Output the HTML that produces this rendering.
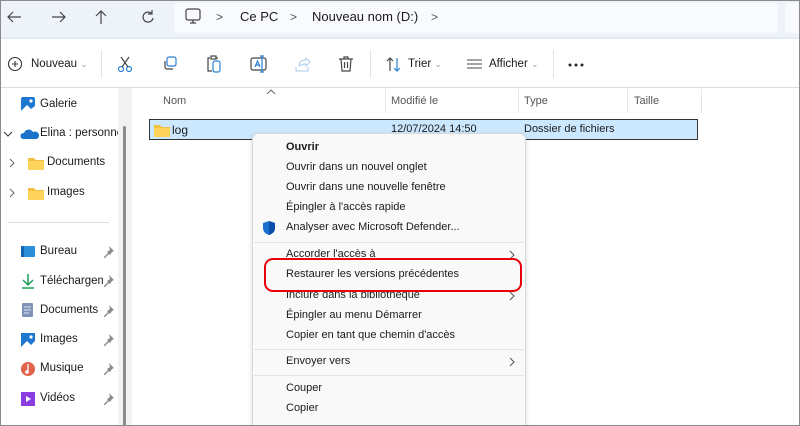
<!DOCTYPE html>
<html><head><meta charset="utf-8"><style>
*{margin:0;padding:0;box-sizing:border-box}
html,body{width:800px;height:426px;overflow:hidden}
body{background:#fff;font-family:"Liberation Sans",sans-serif;font-size:12px;color:#1a1a1a;position:relative}
.a{position:absolute;white-space:nowrap}
svg{position:absolute}
.mi{position:absolute;left:286px;font-size:11px;white-space:nowrap}
.sep{position:absolute;left:254px;width:270px;height:1px;background:#e3e3e3}
.sl{position:absolute;white-space:nowrap;overflow:hidden;font-size:11.5px}
</style></head><body>
<div class="a" style="left:0;top:0;width:800px;height:426px;border:1px solid #8a8a8a;z-index:50;pointer-events:none"></div>
<!-- top bar -->
<div class="a" style="left:0;top:0;width:800px;height:38px;background:#eef3f9"></div>
<div class="a" style="left:0;top:37px;width:800px;height:2px;background:#e4eaf2"></div>
<div class="a" style="left:174px;top:3px;width:604px;height:30px;background:#f8fafd;border-radius:5px"></div>
<div class="a" style="left:785px;top:3px;width:20px;height:30px;background:#f8fafd;border-radius:5px"></div>
<svg width="180" height="38" style="left:0;top:0" fill="none" stroke="#444" stroke-width="1.2">
<path d="M8 17h13M13 12l-5 5 5 5"/><path d="M52 17h13M60 12l5 5-5 5"/><path d="M101 11v13M96 16l5-5 5 5"/>
<path d="M152 14a5 5 0 1 0 1 4M152 10v4h-4"/>
</svg>
<svg width="20" height="20" style="left:184px;top:7px" fill="none" stroke="#444" stroke-width="1.2"><rect x="2" y="2" width="14" height="11" rx="2"/><path d="M9 13v3M6 16h6"/></svg>
<div class="a" style="left:216px;top:10px;font-size:12px;color:#555">&gt;</div>
<div class="a" style="left:240px;top:9px;font-size:13px">Ce PC</div>
<div class="a" style="left:290px;top:10px;font-size:12px;color:#555">&gt;</div>
<div class="a" style="left:312px;top:9px;font-size:13px">Nouveau nom (D:)</div>
<div class="a" style="left:431px;top:10px;font-size:12px;color:#555">&gt;</div>
<!-- toolbar -->
<div class="a" style="left:0;top:87px;width:800px;height:1px;background:#d8dde3"></div>
<div class="a" style="left:101px;top:50px;width:1px;height:28px;background:#e2e2e2"></div>
<div class="a" style="left:370px;top:50px;width:1px;height:28px;background:#e2e2e2"></div>
<div class="a" style="left:553px;top:50px;width:1px;height:28px;background:#e2e2e2"></div>
<svg width="16" height="16" style="left:7px;top:56px" fill="none" stroke="#333" stroke-width="1.1"><circle cx="8" cy="8" r="6.5"/><path d="M8 5v6M5 8h6"/></svg>
<div class="a" style="left:31px;top:58px;font-size:11.5px">Nouveau <span style="color:#999;font-size:9px">⌄</span></div>
<svg width="20" height="20" style="left:116px;top:54px" fill="none" stroke="#2a7fd4" stroke-width="1.2"><circle cx="5" cy="15" r="2.5"/><circle cx="13" cy="15" r="2.5"/><path d="M6 13L13 3M12 13L5 3" stroke="#444"/></svg>
<svg width="20" height="20" style="left:161px;top:55px" fill="none" stroke-width="1.2"><rect x="6" y="2" width="9" height="9" rx="2" stroke="#2a7fd4"/><path d="M4 6v6a2 2 0 0 0 2 2h6" stroke="#444"/></svg>
<svg width="20" height="20" style="left:205px;top:54px" fill="none" stroke-width="1.2"><path d="M5 4H3v13h4M11 4h2" stroke="#444"/><rect x="6" y="2" width="5" height="3" stroke="#444"/><rect x="8" y="7" width="7" height="11" rx="2" stroke="#2a7fd4"/></svg>
<svg width="20" height="20" style="left:249px;top:54px" fill="none" stroke-width="1.2"><rect x="2" y="4" width="15" height="12" rx="2" stroke="#444"/><path d="M6 13l2.5-6 2.5 6M7 11h3" stroke="#2a7fd4"/><path d="M13 2v16M11 2h4M11 18h4" stroke="#2a7fd4"/></svg>
<svg width="20" height="20" style="left:293px;top:55px" fill="none" stroke="#b8d4ee" stroke-width="1.2"><path d="M3 12v4h12v-4M6 11c0-4 3-6 7-6V3l4 4-4 4V9c-3 0-5 1-7 2"/></svg>
<svg width="20" height="20" style="left:336px;top:54px" fill="none" stroke="#444" stroke-width="1.2"><path d="M3 5h14M8 5V3h4v2M5 5l1 12h8l1-12M8.5 8v6M11.5 8v6"/></svg>
<svg width="20" height="20" style="left:384px;top:55px" fill="none" stroke-width="1.2"><path d="M6 16V3M3 6l3-3 3 3" stroke="#444"/><path d="M13 3v13M10 13l3 3 3-3" stroke="#2a7fd4"/></svg>
<div class="a" style="left:408px;top:58px;font-size:11.5px">Trier <span style="color:#999;font-size:9px">⌄</span></div>
<svg width="18" height="14" style="left:466px;top:58px" stroke="#444" stroke-width="1.1"><path d="M1 2h15M1 6h15M1 10h15"/></svg>
<div class="a" style="left:489px;top:58px;font-size:11.5px">Afficher <span style="color:#999;font-size:9px">⌄</span></div>
<svg width="20" height="6" style="left:567px;top:62px" fill="#222"><circle cx="3" cy="3" r="1.5"/><circle cx="9" cy="3" r="1.5"/><circle cx="15" cy="3" r="1.5"/></svg>
<!-- sidebar -->
<div class="a" style="left:118px;top:88px;width:14px;height:338px;background:#f2f2f2"></div>
<div class="a" style="left:123px;top:126px;width:3px;height:300px;background:#8a8a8a;border-radius:2px"></div>
<div class="a" style="left:8px;top:222px;width:101px;height:1px;background:#ddd"></div>
<svg width="18" height="18" style="left:20px;top:96px"><rect x="1" y="1" width="14" height="14" rx="2" fill="#1e78d0"/><path d="M2 14l5-5 4 4 4-3v5H2z" fill="#fff"/><circle cx="11" cy="5" r="1.6" fill="#fff"/></svg>
<div class="sl" style="left:40px;top:98px">Galerie</div>
<svg width="10" height="8" style="left:3px;top:130px" fill="none" stroke="#333"><path d="M1 2l4 4 4-4"/></svg>
<svg width="20" height="14" style="left:20px;top:127px"><path d="M3 12a3 3 0 0 1 1-6 5 5 0 0 1 9-1 3.5 3.5 0 0 1 4 7z" fill="#1a73c8"/></svg>
<div class="sl" style="left:40px;top:127px;width:78px">Elina : personne</div>
<svg width="6" height="10" style="left:9px;top:158px" fill="none" stroke="#666"><path d="M1 1l4 4-4 4"/></svg>
<svg width="18" height="14" style="left:27px;top:156px"><path d="M1 2h6l2 2h8v10H1z" fill="#f5c042"/><path d="M1 5h16v9H1z" fill="#fdd35c"/></svg>
<div class="sl" style="left:47px;top:156px">Documents</div>
<svg width="6" height="10" style="left:9px;top:188px" fill="none" stroke="#666"><path d="M1 1l4 4-4 4"/></svg>
<svg width="18" height="14" style="left:27px;top:186px"><path d="M1 2h6l2 2h8v10H1z" fill="#f5c042"/><path d="M1 5h16v9H1z" fill="#fdd35c"/></svg>
<div class="sl" style="left:47px;top:186px">Images</div>
<svg width="16" height="14" style="left:20px;top:245px"><rect x="1" y="1" width="14" height="11" rx="1" fill="#2a8fd8"/><rect x="1" y="1" width="3" height="11" fill="#1565b0"/></svg>
<div class="sl" style="left:40px;top:245px">Bureau</div>
<svg width="16" height="16" style="left:20px;top:273px" fill="none" stroke="#18a058" stroke-width="1.5"><path d="M8 1v10M3 7l5 5 5-5M2 15h12"/></svg>
<div class="sl" style="left:40px;top:275px;width:63px">Téléchargem</div>
<svg width="14" height="16" style="left:21px;top:302px"><rect x="1" y="1" width="11" height="14" rx="1" fill="#7f93b8"/><path d="M3 5h7M3 8h7M3 11h5" stroke="#dfe6f2"/></svg>
<div class="sl" style="left:40px;top:304px">Documents</div>
<svg width="16" height="16" style="left:20px;top:332px"><rect x="1" y="1" width="14" height="14" fill="#1e78d0"/><path d="M1 15l6-6 4 4 4-4v6z" fill="#fff"/><circle cx="11" cy="5" r="1.6" fill="#fff"/></svg>
<div class="sl" style="left:40px;top:333px">Images</div>
<svg width="16" height="16" style="left:20px;top:361px"><circle cx="8" cy="8" r="7" fill="#e0634a"/><path d="M8 3v8" stroke="#fff" stroke-width="1.3"/><circle cx="7" cy="11" r="1.8" fill="#fff"/></svg>
<div class="sl" style="left:40px;top:362px">Musique</div>
<svg width="16" height="16" style="left:20px;top:391px"><rect x="1" y="1" width="14" height="14" fill="#8a3ee0"/><path d="M6 5l5 3-5 3z" fill="#fff"/></svg>
<div class="sl" style="left:40px;top:392px">Vidéos</div>
<svg width="12" height="170" style="left:103px;top:245px" fill="#8a8a8a">
<path id="p" d="M6 1l5 5-2 1-2 3-1-1-4 4-1 0 0-1 4-4-1-1 3-2z"/>
<use href="#p" y="29"/><use href="#p" y="59"/><use href="#p" y="88"/><use href="#p" y="117"/><use href="#p" y="147"/></svg>
<!-- header -->
<svg width="10" height="6" style="left:266px;top:89px" fill="none" stroke="#666"><path d="M1 5l4-4 4 4"/></svg>
<div class="a" style="left:163px;top:95px;color:#555;font-size:11px">Nom</div>
<div class="a" style="left:391px;top:95px;color:#555;font-size:11px">Modifié le</div>
<div class="a" style="left:524px;top:95px;color:#555;font-size:11px">Type</div>
<div class="a" style="left:634px;top:95px;color:#555;font-size:11px">Taille</div>
<div class="a" style="left:385px;top:89px;width:1px;height:24px;background:#e5e5e5"></div>
<div class="a" style="left:518px;top:89px;width:1px;height:24px;background:#e5e5e5"></div>
<div class="a" style="left:627px;top:89px;width:1px;height:24px;background:#e5e5e5"></div>
<div class="a" style="left:701px;top:89px;width:1px;height:24px;background:#e5e5e5"></div>
<!-- selected row -->
<div class="a" style="left:149px;top:119px;width:549px;height:21px;background:#cce8ff;border:1px solid #333"></div>
<svg width="18" height="14" style="left:153px;top:123px"><path d="M1 2h6l2 2h8v10H1z" fill="#f5c042"/><path d="M1 5h16v9H1z" fill="#fdd35c"/></svg>
<div class="a" style="left:172px;top:123px;font-size:12px">log</div>
<div class="a" style="left:391px;top:123px;font-size:11px">12/07/2024 14:50</div>
<div class="a" style="left:524px;top:123px;font-size:11px">Dossier de fichiers</div>
<!-- context menu -->
<div class="a" style="left:252px;top:133px;width:274px;height:300px;background:#f9f9f9;border:1px solid #d8d8d8;border-radius:6px;box-shadow:0 2px 6px rgba(0,0,0,.15)"></div>
<div class="mi" style="top:141px;font-weight:bold">Ouvrir</div>
<div class="mi" style="top:161px">Ouvrir dans un nouvel onglet</div>
<div class="mi" style="top:181px">Ouvrir dans une nouvelle fenêtre</div>
<div class="mi" style="top:201px">Épingler à l'accès rapide</div>
<svg width="14" height="16" style="left:262px;top:220px"><path d="M7 1l6 2v5c0 4-3 6-6 7-3-1-6-3-6-7V3z" fill="#1a6fd0"/><path d="M7 1l6 2v5c0 4-3 6-6 7z" fill="#0b4fa8"/></svg>
<div class="mi" style="top:221px">Analyser avec Microsoft Defender...</div>
<div class="sep" style="top:242px"></div>
<div class="mi" style="top:248px">Accorder l'accès à</div>
<div class="mi" style="top:268px">Restaurer les versions précédentes</div>
<div class="mi" style="top:289px">Inclure dans la bibliothèque</div>
<div class="mi" style="top:309px">Épingler au menu Démarrer</div>
<div class="mi" style="top:329px">Copier en tant que chemin d'accès</div>
<div class="sep" style="top:349px"></div>
<div class="mi" style="top:355px">Envoyer vers</div>
<div class="sep" style="top:375px"></div>
<div class="mi" style="top:382px">Couper</div>
<div class="mi" style="top:402px">Copier</div>
<svg width="6" height="10" style="left:509px;top:250px" fill="none" stroke="#555"><path d="M1 1l4 4-4 4"/></svg>
<svg width="6" height="10" style="left:509px;top:291px" fill="none" stroke="#555"><path d="M1 1l4 4-4 4"/></svg>
<svg width="6" height="10" style="left:509px;top:357px" fill="none" stroke="#555"><path d="M1 1l4 4-4 4"/></svg>
<div class="a" style="left:264px;top:258px;width:258px;height:34px;border:2.5px solid #e8000b;border-radius:9px"></div>
</body></html>
